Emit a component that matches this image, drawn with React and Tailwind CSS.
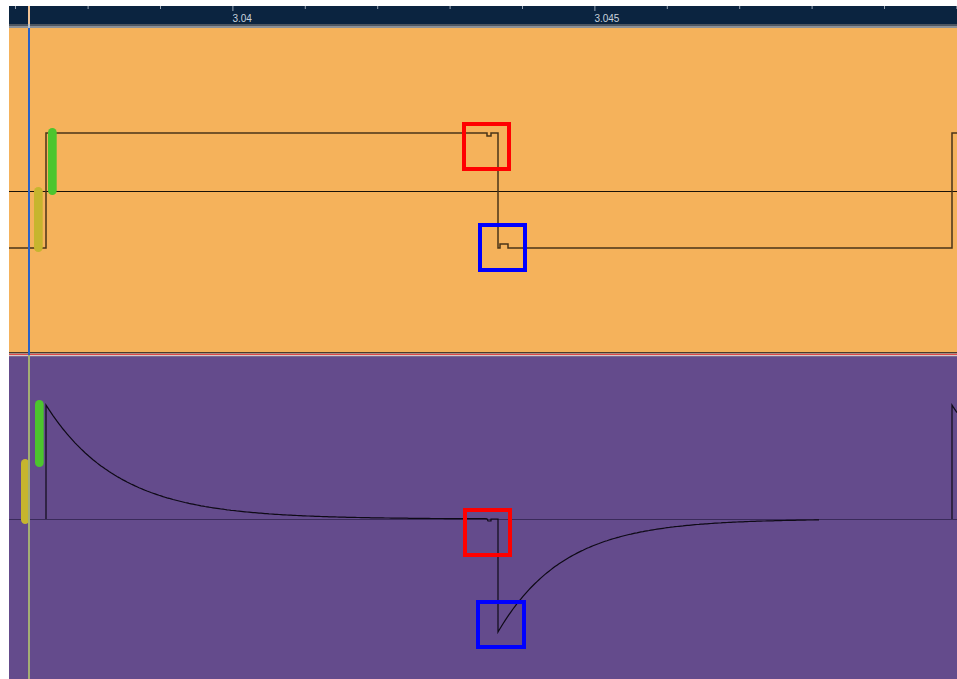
import { useMemo } from 'react';

const W = 948;
const TICKS = [15, 87.6, 160, 232.4, 304.8, 377.2, 449.6, 522, 594.4, 666.8, 739.2, 811.6, 884, 956.4];
const LABELS = [
  { x: 232.4, text: '3.04' },
  { x: 594.4, text: '3.045' },
];

function Ruler() {
  return (
    <div className="h-[18px] bg-[#0b2440]">
      <svg width={W} height={18} className="block">
        {TICKS.map((t) => {
          const major = LABELS.some((l) => l.x === t);
          return (
            <line
              key={t}
              x1={t - 9 + 0.5}
              x2={t - 9 + 0.5}
              y1={0}
              y2={major ? 5 : 3}
              stroke="#9aa6b4"
              strokeWidth={1}
            />
          );
        })}
        {LABELS.map((l) => (
          <text
            key={l.text}
            x={l.x - 9}
            y={16}
            fill="#c9d2dc"
            fontSize="10"
            fontFamily="'Liberation Sans', Arial, sans-serif"
          >
            {l.text}
          </text>
        ))}
      </svg>
    </div>
  );
}

function SquarePanel() {
  // square wave with the small notches near the transition
  const wave = 'M0 220 H37 V105 H478 V108 H482 V105 H489 V220 H491 V216 H499 V220 H943 V105 H948';
  return (
    <div className="h-[324px] bg-[#f5b25b]">
      <svg width={W} height={324} className="block">
        <line x1={0} x2={W} y1={163.5} y2={163.5} stroke="#1a1208" strokeWidth={1} />
        <path d={wave} fill="none" stroke="#4a3418" strokeWidth={1.5} />
        <rect x={25} y={159} width={8.7} height={65} rx={4.3} fill="#c6b52e" />
        <rect x={39} y={100} width={8.7} height={67} rx={4.3} fill="#4cc52e" />
        <rect x={455} y={96} width={45} height={45} fill="none" stroke="#ff0000" strokeWidth={4} />
        <rect x={471} y={197} width={45} height={45} fill="none" stroke="#0000ff" strokeWidth={4} />
      </svg>
    </div>
  );
}

function DecayPanel() {
  const curves = useMemo(() => {
    const pts = ['M37 162 V48'];
    for (let x = 38; x <= 478; x += 2) {
      pts.push(`L${x} ${(162 - 114 * Math.exp(-(x - 37) / 72)).toFixed(1)}`);
    }
    pts.push('L479 164 L482 164 L482 162 L489 162 V275');
    for (let x = 490; x <= 811; x += 2) {
      pts.push(`L${x} ${(162 + 113 * Math.exp(-(x - 489) / 66)).toFixed(1)}`);
    }
    const right = ['M943 162 V48'];
    for (let x = 944; x <= W; x += 1) {
      right.push(`L${x} ${(162 - 114 * Math.exp(-(x - 943) / 72)).toFixed(1)}`);
    }
    return { main: pts.join(' '), right: right.join(' ') };
  }, []);

  return (
    <div className="flex-1 bg-[#644b8c]">
      <svg width={W} height={322} className="block">
        <line x1={0} x2={W} y1={162.5} y2={162.5} stroke="#3a2a5a" strokeWidth={1.2} />
        <path d={curves.main} fill="none" stroke="#0e0a16" strokeWidth={1.2} />
        <path d={curves.right} fill="none" stroke="#0e0a16" strokeWidth={1.2} />
        <rect x={12} y={102} width={8.3} height={65} rx={4.2} fill="#c6b52e" />
        <rect x={26} y={43} width={8.7} height={67} rx={4.3} fill="#4cc52e" />
        <rect x={456} y={153} width={45} height={45} fill="none" stroke="#ff0000" strokeWidth={4} />
        <rect x={469} y={245} width={46} height={45} fill="none" stroke="#0000ff" strokeWidth={4} />
      </svg>
    </div>
  );
}

export default function App() {
  return (
    <div className="relative w-[957px] h-[679px] overflow-hidden bg-white pl-[9px] pt-[6px]">
      <div className="flex flex-col h-full">
        <Ruler />
        {/* gray band under the ruler */}
        <div className="h-[2px] bg-[#4e5660]" />
        <div className="h-[2px] bg-[#8c9198]" />
        <SquarePanel />
        {/* separator between tracks */}
        <div className="h-[1px] bg-[#4a3b2c]" />
        <div className="h-[1px] bg-[#a88a80]" />
        <div className="h-[1px] bg-[#e04848]" />
        <div className="h-[1px] bg-[#d8c8cc]" />
        <div className="h-[1px] bg-[#7a6a90]" />
        <DecayPanel />
      </div>

      {/* playback cursor */}
      <div className="absolute left-[28px] top-[6px] bottom-0 w-[2px] flex flex-col">
        <div className="h-[18px] bg-[#f2c496]" />
        <div className="h-[4px] bg-[#b8c0c8]" />
        <div className="h-[327px] bg-[#2a62c8]" />
        <div className="flex-1 bg-[#a3ae74]" />
      </div>
    </div>
  );
}
